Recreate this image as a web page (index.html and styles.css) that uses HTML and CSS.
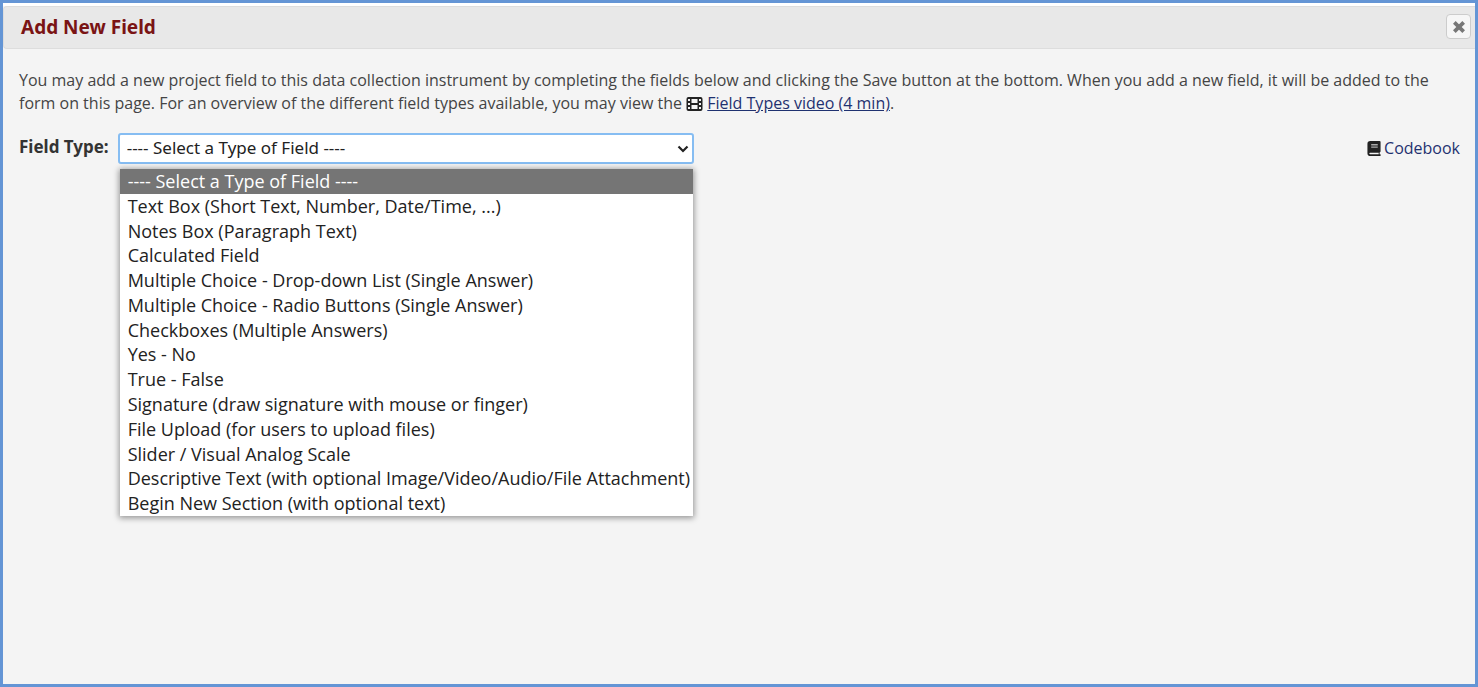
FILE: index.html
```html
<!DOCTYPE html>
<html lang="en">
<head>
<meta charset="utf-8">
<title>Add New Field</title>
<link rel="stylesheet" href="styles.css">
</head>
<body>
<main class="dialog" role="dialog" aria-labelledby="dialog-title">
  <header class="titlebar">
    <h1 class="title" id="dialog-title">Add New Field</h1>
    <button class="close" type="button" aria-label="Close">
      <svg viewBox="0 0 12 12" width="14" height="14" aria-hidden="true"><path d="M2 2L10 10M10 2L2 10" fill="none" stroke="#777" stroke-width="3.2"/></svg>
    </button>
  </header>
  <div class="content">
    <p class="intro">You may add a new project field to this data collection instrument by completing the fields below and clicking the Save button at the bottom. When you add a new field, it will be added to the form on this page. For an overview of the different field types available, you may view the <svg class="film" viewBox="0 0 16 14" width="17" height="14" aria-hidden="true"><rect width="16" height="14" rx="2" fill="#222"/><path d="M5 2h6v4H5zM5 8h6v4H5zM1.500 2h2v2h-2zM1.500 6h2v2h-2zM1.500 10h2v2h-2zM12.500 2h2v2h-2zM12.500 6h2v2h-2zM12.500 10h2v2h-2z" fill="#f4f4f4"/></svg> <a class="video" href="#video">Field Types video (4 min)</a>.</p>
    <div class="row">
      <label class="label" for="field-type">Field Type:</label>
      <div class="picker">
        <select class="select" id="field-type"><option>---- Select a Type of Field ----</option></select>
        <svg class="chevron" viewBox="0 0 12 8" width="12" height="8" aria-hidden="true"><path d="M1.500 1.500L6 6L10.500 1.500" fill="none" stroke="#222" stroke-width="2.200"/></svg>
        <ul class="menu" role="listbox" aria-label="Field types">
          <li class="option selected" role="option" aria-selected="true">---- Select a Type of Field ----</li>
          <li class="option" role="option">Text Box (Short Text, Number, Date/Time, ...)</li>
          <li class="option" role="option">Notes Box (Paragraph Text)</li>
          <li class="option" role="option">Calculated Field</li>
          <li class="option" role="option">Multiple Choice - Drop-down List (Single Answer)</li>
          <li class="option" role="option">Multiple Choice - Radio Buttons (Single Answer)</li>
          <li class="option" role="option">Checkboxes (Multiple Answers)</li>
          <li class="option" role="option">Yes - No</li>
          <li class="option" role="option">True - False</li>
          <li class="option" role="option">Signature (draw signature with mouse or finger)</li>
          <li class="option" role="option">File Upload (for users to upload files)</li>
          <li class="option" role="option">Slider / Visual Analog Scale</li>
          <li class="option" role="option">Descriptive Text (with optional Image/Video/Audio/File Attachment)</li>
          <li class="option" role="option">Begin New Section (with optional text)</li>
        </ul>
      </div>
      <a class="codebook" href="#codebook"><svg viewBox="0 0 14 16" width="14" height="15" aria-hidden="true"><path d="M3 0H13Q14 0 14 1V11Q14 12 13 12.300V14H14V16H3Q0 16 0 13V3Q0 0 3 0Z" fill="#222"/><path d="M3 12.500H12V14H3Q2 14 2 13.200T3 12.500Z" fill="#f4f4f4"/><path d="M4 4H11M4 6.500H11" stroke="#aaa" stroke-width="1.400"/></svg>Codebook</a>
    </div>
  </div>
</main>
</body>
</html>
```

FILE: styles.css
```css
* { box-sizing: border-box; }
body {
  margin: 0;
  font-family: "Open Sans", sans-serif;
  font-size: 16px;
  color: #444;
}
.dialog {
  min-height: 100vh;
  padding-top: 3px;
  border: 3px solid #6495d5;
  background: linear-gradient(#fff 3px, #f4f4f4 3px);
}
.titlebar {
  display: flex;
  align-items: center;
  justify-content: space-between;
  height: 43px;
  padding: 0 4px 2px 17px;
  border: 1px solid #ddd;
  border-right: 0;
  border-radius: 4px 0 0 4px;
  background: #e8e8e8;
}
.title {
  margin: 0;
  font-family: "Noto Sans", sans-serif;
  font-size: 19px;
  line-height: 24px;
  color: #7a1414;
}
.close {
  display: flex;
  align-items: center;
  justify-content: center;
  width: 25px;
  height: 25px;
  padding: 0;
  border: 1px solid #ccc;
  border-radius: 4px;
  background: #f6f6f6;
}
.content { padding: 20px 15px 0 16px; }
.intro {
  margin: 0;
  line-height: 23px;
}
.film { vertical-align: -2px; }
.video, .codebook { color: #1f3170; }
.row {
  display: flex;
  align-items: flex-start;
  gap: 9px;
  margin-top: 18px;
}
.label {
  font-family: "Noto Sans", sans-serif;
  font-size: 17px;
  font-weight: 700;
  line-height: 28px;
  color: #333;
}
.picker {
  position: relative;
  width: 576px;
}
.select {
  display: block;
  appearance: none;
  width: 100%;
  height: 31px;
  padding: 0 32px 2px 7px;
  border: 2px solid #86bdf2;
  border-radius: 3px;
  background: #fff;
  color: #222;
  font-family: "Noto Sans", sans-serif;
  font-size: 17px;
  outline: 0;
}
.chevron {
  position: absolute;
  top: 12px;
  right: 5px;
  pointer-events: none;
}
.menu {
  position: absolute;
  top: 36px;
  left: 2px;
  right: 1px;
  display: flex;
  flex-direction: column;
  height: 347px;
  margin: 0;
  padding: 0;
  list-style: none;
  background: #fff;
  box-shadow: 0 1px 6px 1px rgba(0, 0, 0, .4);
  color: #222;
  font-size: 18px;
}
.option {
  flex: 1;
  padding: 0 8px;
  line-height: 24px;
  white-space: nowrap;
}
.selected {
  background: #757575;
  color: #fff;
}
.codebook {
  display: flex;
  align-items: center;
  gap: 3px;
  margin-left: auto;
  line-height: 30px;
  text-decoration: none;
}
```
